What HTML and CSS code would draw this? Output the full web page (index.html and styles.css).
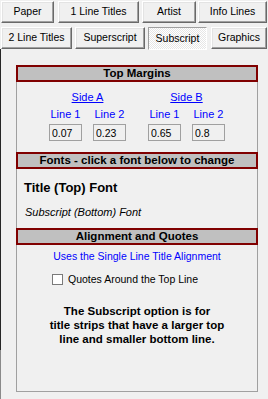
FILE: index.html
```html
<!DOCTYPE html>
<html lang="en">
<head>
    <meta charset="UTF-8">
    <meta name="viewport" content="width=device-width, initial-scale=1.0">
    <title>Subscript Options</title>
    <link rel="stylesheet" href="styles.css">
</head>
<body>
    <div class="tabs">
        <div class="tab-row">
            <span class="tab tab-paper">Paper</span>
            <span class="tab tab-one">1 Line Titles</span>
            <span class="tab tab-artist">Artist</span>
            <span class="tab tab-info">Info Lines</span>
        </div>
        <div class="tab-row">
            <span class="tab tab-two">2 Line Titles</span>
            <span class="tab tab-super">Superscript</span>
            <span class="tab tab-sub active">Subscript</span>
            <span class="tab tab-graphics">Graphics</span>
        </div>
    </div>
    <div class="page">
        <div class="panel">
            <div class="section-title">Top Margins</div>
            <div class="margins">
                <div class="side">
                    <a class="side-link" href="#">Side A</a>
                    <div class="fields">
                        <div class="field">
                            <span class="field-label">Line 1</span>
                            <input class="field-input" type="text" value="0.07">
                        </div>
                        <div class="field">
                            <span class="field-label">Line 2</span>
                            <input class="field-input" type="text" value="0.23">
                        </div>
                    </div>
                </div>
                <div class="side">
                    <a class="side-link" href="#">Side B</a>
                    <div class="fields">
                        <div class="field">
                            <span class="field-label">Line 1</span>
                            <input class="field-input" type="text" value="0.65">
                        </div>
                        <div class="field">
                            <span class="field-label">Line 2</span>
                            <input class="field-input" type="text" value="0.8">
                        </div>
                    </div>
                </div>
            </div>

            <div class="section-title fonts-title">Fonts - click a font below to change</div>
            <div class="font-top">Title (Top) Font</div>
            <div class="font-bottom">Subscript (Bottom) Font</div>

            <div class="section-title align-title">Alignment and Quotes</div>
            <div class="align-note">Uses the Single Line Title Alignment</div>
            <label class="check-row">
                <span class="check-box"></span>
                <span>Quotes Around the Top Line</span>
            </label>

            <p class="info">The Subscript option is for<br>title strips that have a larger top<br>line and smaller bottom line.</p>
        </div>
    </div>
</body>
</html>
```

FILE: styles.css
```css
body, html {
    margin: 0;
    padding: 0;
    font-family: 'Liberation Sans', Arial, sans-serif;
    background-color: #f0f0f0;
    color: #000;
}
body {
    width: 268px;
    height: 399px;
    overflow: hidden;
}

/* tab buttons */
.tabs {
    padding: 1px 1px 0 1px;
}
.tab-row {
    display: flex;
    justify-content: space-between;
    margin-bottom: 4px;
}
.tab-row:last-child {
    margin-bottom: 0;
}
.tab {
    box-sizing: border-box;
    height: 22px;
    line-height: 19px;
    font-size: 10.5px;
    text-align: center;
    background-color: #f0f0f0;
    border: 1px solid;
    border-color: #fff #696969 #696969 #fff;
    box-shadow: inset -1px -1px #a0a0a0, inset 1px 1px #e3e3e3;
}
.tab-paper { width: 53px; }
.tab-one { width: 81px; margin-left: 4px; }
.tab-artist { width: 54px; margin-left: 3px; }
.tab-info { width: 69px; margin-left: 2px; }
.tab-two { width: 71px; }
.tab-super { width: 70px; margin-left: 3px; }
.tab-sub { width: 59px; margin-left: 3px; }
.tab-graphics { width: 56px; margin-left: 4px; }
.tab.active {
    height: 23px;
    line-height: 21px;
    border-color: #a0a0a0 #fff #fff #a0a0a0;
    box-shadow: none;
    background-color: #fafafa;
    background-image: repeating-conic-gradient(#e6e6e6 0 25%, #fff 0 50%);
    background-size: 2px 2px;
}

/* page body */
.page {
    height: 351px;
    margin-top: -1px;
    padding: 16px 10px 0 16px;
    box-sizing: border-box;
    background: linear-gradient(#262626, #262626) no-repeat 0 0 / 1px 301px,
                linear-gradient(#8a8a8a, #8a8a8a) no-repeat 0 301px / 1px 50px;
}
.panel {
    box-sizing: border-box;
    width: 242px;
    height: 327px;
    border: 1px solid #a0a0a0;
    border-top: none;
}
.section-title {
    margin: 0 -1px;
    height: 17px;
    box-sizing: border-box;
    border: 2px solid #800000;
    background-color: #c0c0c0;
    font-size: 11.5px;
    font-weight: bold;
    line-height: 13px;
    text-align: center;
}

/* top margins */
.margins {
    display: flex;
    justify-content: center;
    gap: 22px;
    margin-top: 8px;
}
.side {
    display: flex;
    flex-direction: column;
    align-items: center;
}
.side-link {
    color: #0000ff;
    font-size: 11px;
    line-height: 14px;
    text-decoration: underline;
}
.fields {
    display: flex;
    gap: 11px;
    margin-top: 3px;
}
.field {
    display: flex;
    flex-direction: column;
    align-items: center;
}
.field-label {
    color: #0000ff;
    font-size: 11px;
    line-height: 14px;
}
.field-input {
    box-sizing: border-box;
    width: 33px;
    height: 17px;
    margin: 3px 0 0 0;
    padding: 0 2px;
    border: 1px solid #a0a0a0;
    background-color: #f0f0f0;
    font-family: 'Liberation Sans', Arial, sans-serif;
    font-size: 10.5px;
    color: #000;
    outline: none;
}

/* fonts */
.fonts-title {
    margin-top: 11px;
}
.font-top {
    margin-top: 11px;
    padding-left: 7px;
    font-size: 13px;
    font-weight: bold;
    line-height: 16px;
}
.font-bottom {
    margin-top: 9px;
    padding-left: 8px;
    font-size: 11px;
    font-style: italic;
    line-height: 14px;
}

/* alignment */
.align-title {
    margin-top: 9px;
}
.align-note {
    margin-top: 4px;
    color: #0000ff;
    font-size: 10.5px;
    line-height: 14px;
    text-align: center;
}
.check-row {
    display: flex;
    align-items: center;
    gap: 5px;
    margin-top: 9px;
    padding-left: 35px;
    font-size: 10.5px;
    line-height: 14px;
}
.check-box {
    box-sizing: border-box;
    width: 11px;
    height: 11px;
    border: 1px solid #7a7a7a;
    background-color: #fff;
}
.info {
    margin: 18px 0 0 0;
    font-size: 11.5px;
    font-weight: bold;
    line-height: 14px;
    text-align: center;
}
```
